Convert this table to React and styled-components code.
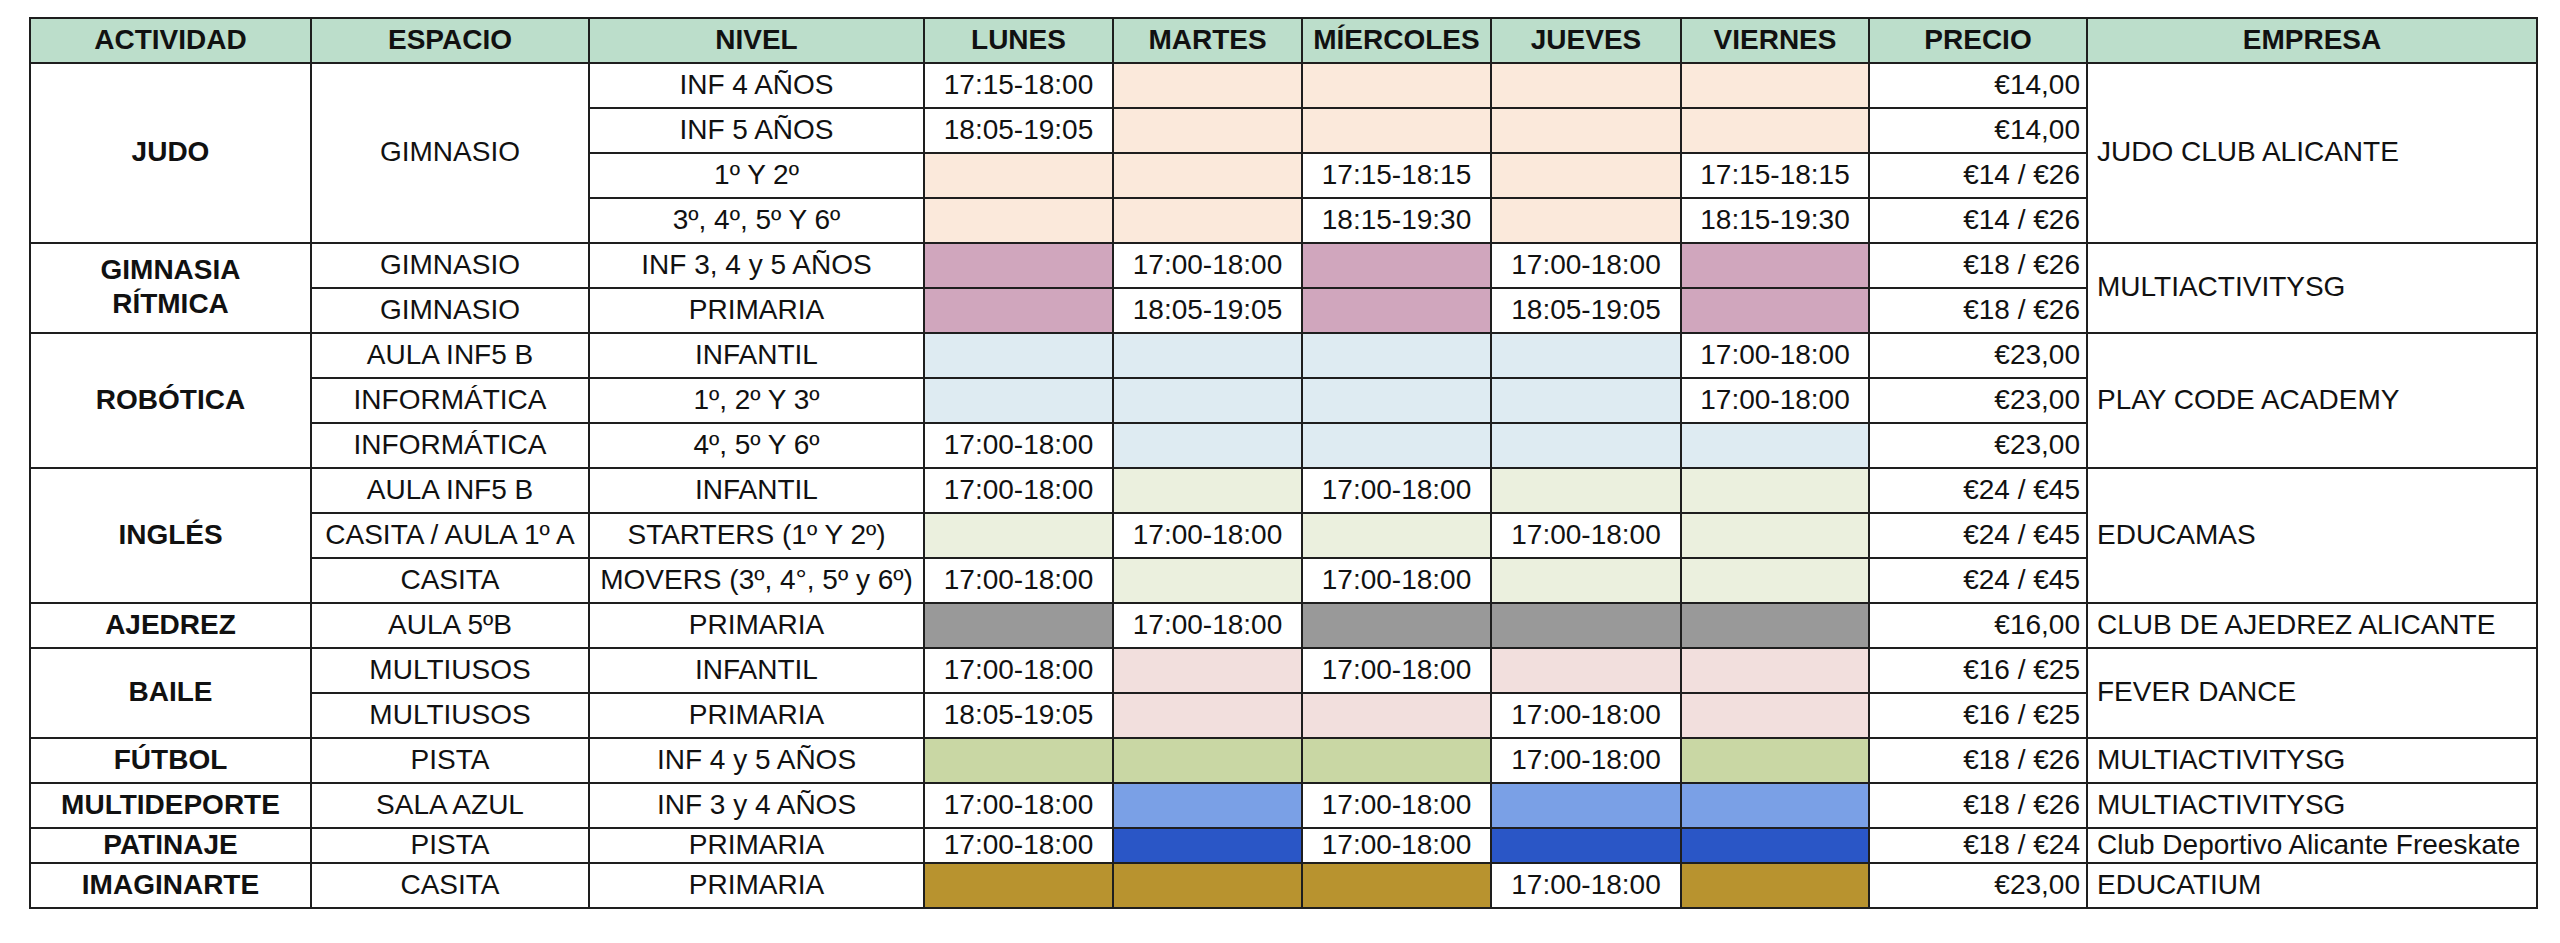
import React from "react";
import styled, { createGlobalStyle } from "styled-components";

const GlobalStyle = createGlobalStyle`
  html, body { margin: 0; padding: 0; background: #ffffff; }
  body { font-family: "Liberation Sans", Arial, sans-serif; color: #111; }
`;

const Page = styled.div`
  padding: 17px 0 0 29px;
`;

const Grid = styled.div`
  display: inline-grid;
  grid-template-columns: 279px 276px 333px 187px 187px 187px 188px 186px 216px 448px;
  grid-template-rows: repeat(18, 43px) 33px 43px;
  gap: 2px;
  padding: 2px;
  background: #1e1e1e;
`;

const Cell = styled.div`
  display: flex;
  align-items: center;
  justify-content: ${(p) =>
    p.$align === "right" ? "flex-end" : p.$align === "left" ? "flex-start" : "center"};
  text-align: ${(p) => p.$align || "center"};
  padding: ${(p) =>
    p.$align === "right" ? "0 6px 2px 0" : p.$align === "left" ? "0 0 2px 9px" : "0 0 2px 0"};
  background: ${(p) => p.$bg || "#ffffff"};
  grid-row: ${(p) => (p.$span ? `span ${p.$span}` : "auto")};
  font-size: 28px;
  font-weight: ${(p) => (p.$bold ? 700 : 400)};
  line-height: 1.2;
  white-space: nowrap;
  overflow: hidden;
`;

const HeadCell = styled(Cell)`
  background: #bcdecb;
  font-weight: 700;
`;

const COLORS = {
  judo: "#fbe9db",
  gim: "#d0a6bd",
  rob: "#deebf2",
  ing: "#ebf0de",
  aje: "#999999",
  baile: "#f2dfdd",
  fut: "#c9d7a4",
  multi: "#7aa0e6",
  pat: "#2a56c6",
  imag: "#b8932f",
};

const HEADERS = [
  "ACTIVIDAD",
  "ESPACIO",
  "NIVEL",
  "LUNES",
  "MARTES",
  "MÍERCOLES",
  "JUEVES",
  "VIERNES",
  "PRECIO",
  "EMPRESA",
];

const _ = null;

const GROUPS = [
  {
    name: "JUDO",
    color: COLORS.judo,
    espacioSpan: "GIMNASIO",
    empresa: "JUDO CLUB ALICANTE",
    rows: [
      { nivel: "INF 4 AÑOS", days: ["17:15-18:00", _, _, _, _], price: "€14,00" },
      { nivel: "INF 5 AÑOS", days: ["18:05-19:05", _, _, _, _], price: "€14,00" },
      { nivel: "1º Y 2º", days: [_, _, "17:15-18:15", _, "17:15-18:15"], price: "€14 / €26" },
      { nivel: "3º, 4º, 5º Y 6º", days: [_, _, "18:15-19:30", _, "18:15-19:30"], price: "€14 / €26" },
    ],
  },
  {
    name: (
      <>
        GIMNASIA
        <br />
        RÍTMICA
      </>
    ),
    color: COLORS.gim,
    empresa: "MULTIACTIVITYSG",
    rows: [
      { espacio: "GIMNASIO", nivel: "INF 3, 4 y 5 AÑOS", days: [_, "17:00-18:00", _, "17:00-18:00", _], price: "€18 / €26" },
      { espacio: "GIMNASIO", nivel: "PRIMARIA", days: [_, "18:05-19:05", _, "18:05-19:05", _], price: "€18 / €26" },
    ],
  },
  {
    name: "ROBÓTICA",
    color: COLORS.rob,
    empresa: "PLAY CODE ACADEMY",
    rows: [
      { espacio: "AULA INF5 B", nivel: "INFANTIL", days: [_, _, _, _, "17:00-18:00"], price: "€23,00" },
      { espacio: "INFORMÁTICA", nivel: "1º, 2º Y 3º", days: [_, _, _, _, "17:00-18:00"], price: "€23,00" },
      { espacio: "INFORMÁTICA", nivel: "4º, 5º Y 6º", days: ["17:00-18:00", _, _, _, _], price: "€23,00" },
    ],
  },
  {
    name: "INGLÉS",
    color: COLORS.ing,
    empresa: "EDUCAMAS",
    rows: [
      { espacio: "AULA INF5 B", nivel: "INFANTIL", days: ["17:00-18:00", _, "17:00-18:00", _, _], price: "€24 / €45" },
      { espacio: "CASITA / AULA 1º A", nivel: "STARTERS (1º Y 2º)", days: [_, "17:00-18:00", _, "17:00-18:00", _], price: "€24 / €45" },
      { espacio: "CASITA", nivel: "MOVERS (3º, 4°, 5º y 6º)", days: ["17:00-18:00", _, "17:00-18:00", _, _], price: "€24 / €45" },
    ],
  },
  {
    name: "AJEDREZ",
    color: COLORS.aje,
    empresa: "CLUB DE AJEDREZ ALICANTE",
    rows: [
      { espacio: "AULA 5ºB", nivel: "PRIMARIA", days: [_, "17:00-18:00", _, _, _], price: "€16,00" },
    ],
  },
  {
    name: "BAILE",
    color: COLORS.baile,
    empresa: "FEVER DANCE",
    rows: [
      { espacio: "MULTIUSOS", nivel: "INFANTIL", days: ["17:00-18:00", _, "17:00-18:00", _, _], price: "€16 / €25" },
      { espacio: "MULTIUSOS", nivel: "PRIMARIA", days: ["18:05-19:05", _, _, "17:00-18:00", _], price: "€16 / €25" },
    ],
  },
  {
    name: "FÚTBOL",
    color: COLORS.fut,
    empresa: "MULTIACTIVITYSG",
    rows: [
      { espacio: "PISTA", nivel: "INF 4 y 5 AÑOS", days: [_, _, _, "17:00-18:00", _], price: "€18 / €26" },
    ],
  },
  {
    name: "MULTIDEPORTE",
    color: COLORS.multi,
    empresa: "MULTIACTIVITYSG",
    rows: [
      { espacio: "SALA AZUL", nivel: "INF 3 y 4 AÑOS", days: ["17:00-18:00", _, "17:00-18:00", _, _], price: "€18 / €26" },
    ],
  },
  {
    name: "PATINAJE",
    color: COLORS.pat,
    empresa: "Club Deportivo Alicante Freeskate",
    rows: [
      { espacio: "PISTA", nivel: "PRIMARIA", days: ["17:00-18:00", _, "17:00-18:00", _, _], price: "€18 / €24" },
    ],
  },
  {
    name: "IMAGINARTE",
    color: COLORS.imag,
    empresa: "EDUCATIUM",
    rows: [
      { espacio: "CASITA", nivel: "PRIMARIA", days: [_, _, _, "17:00-18:00", _], price: "€23,00" },
    ],
  },
];

function GroupRows({ group }) {
  const n = group.rows.length;
  const out = [];
  group.rows.forEach((row, i) => {
    const k = `${i}`;
    if (i === 0) {
      out.push(
        <Cell key={k + "a"} $span={n} $bold>
          <span>{group.name}</span>
        </Cell>
      );
      if (group.espacioSpan) {
        out.push(
          <Cell key={k + "e"} $span={n}>
            {group.espacioSpan}
          </Cell>
        );
      }
    }
    if (!group.espacioSpan) {
      out.push(<Cell key={k + "e"}>{row.espacio}</Cell>);
    }
    out.push(<Cell key={k + "n"}>{row.nivel}</Cell>);
    row.days.forEach((d, j) =>
      out.push(
        <Cell key={k + "d" + j} $bg={d ? "#ffffff" : group.color}>
          {d}
        </Cell>
      )
    );
    out.push(
      <Cell key={k + "p"} $align="right">
        {row.price}
      </Cell>
    );
    if (i === 0) {
      out.push(
        <Cell key={k + "m"} $span={n} $align="left">
          {group.empresa}
        </Cell>
      );
    }
  });
  return out;
}

export default function App() {
  return (
    <>
      <GlobalStyle />
      <Page>
        <Grid>
          {HEADERS.map((h) => (
            <HeadCell key={h}>{h}</HeadCell>
          ))}
          {GROUPS.map((g, i) => (
            <GroupRows key={i} group={g} />
          ))}
        </Grid>
      </Page>
    </>
  );
}
